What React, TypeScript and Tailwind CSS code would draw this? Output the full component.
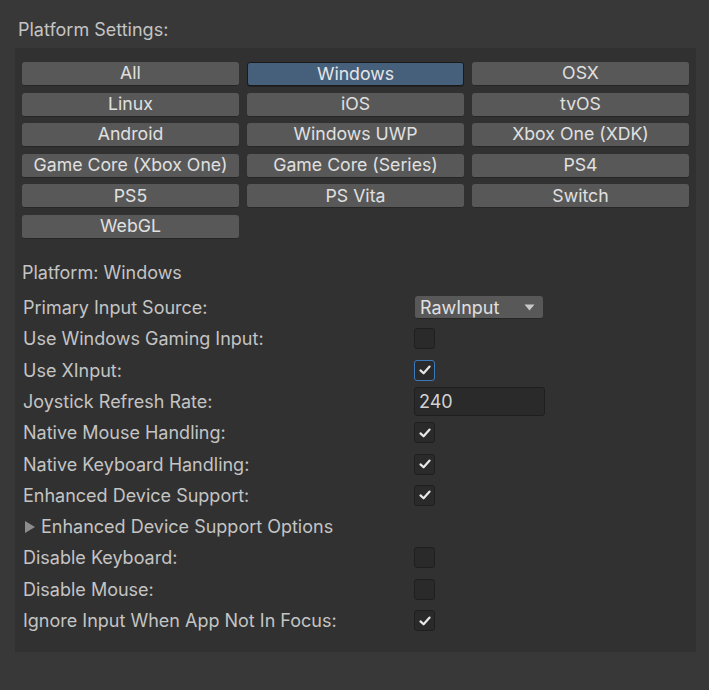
import React from "react";

const platforms = [
  "All", "Windows", "OSX",
  "Linux", "iOS", "tvOS",
  "Android", "Windows UWP", "Xbox One (XDK)",
  "Game Core (Xbox One)", "Game Core (Series)", "PS4",
  "PS5", "PS Vita", "Switch",
  "WebGL",
];

function Check() {
  return (
    <svg width="14" height="14" viewBox="0 0 14 14" className="block">
      <path d="M2.5 7.4 L5.6 10.3 L11.6 3.6" fill="none" stroke="#e8e8e8" strokeWidth="2.2" strokeLinecap="round" strokeLinejoin="round" />
    </svg>
  );
}

function Checkbox({ checked, focused }: { checked: boolean; focused?: boolean }) {
  return (
    <div
      className={
        focused
          ? "w-[21px] h-[21px] rounded-[3px] bg-[#2a2a2a] border border-[#3a79bb] flex items-center justify-center"
          : "w-[21px] h-[21px] rounded-[3px] bg-[#2a2a2a] border border-[#1f1f1f] flex items-center justify-center"
      }
    >
      {checked ? <Check /> : null}
    </div>
  );
}

type Row =
  | { label: string; kind: "dropdown"; value: string }
  | { label: string; kind: "check"; checked: boolean; focused?: boolean }
  | { label: string; kind: "text"; value: string }
  | { label: string; kind: "foldout" };

const rows: Row[] = [
  { label: "Primary Input Source:", kind: "dropdown", value: "RawInput" },
  { label: "Use Windows Gaming Input:", kind: "check", checked: false },
  { label: "Use XInput:", kind: "check", checked: true, focused: true },
  { label: "Joystick Refresh Rate:", kind: "text", value: "240" },
  { label: "Native Mouse Handling:", kind: "check", checked: true },
  { label: "Native Keyboard Handling:", kind: "check", checked: true },
  { label: "Enhanced Device Support:", kind: "check", checked: true },
  { label: "Enhanced Device Support Options", kind: "foldout" },
  { label: "Disable Keyboard:", kind: "check", checked: false },
  { label: "Disable Mouse:", kind: "check", checked: false },
  { label: "Ignore Input When App Not In Focus:", kind: "check", checked: true },
];

export default function App() {
  return (
    <div
      className="w-[709px] h-[690px] bg-[#383838] text-[#c4c4c4] overflow-hidden"
      style={{ fontFamily: "Inter, 'Noto Sans', sans-serif" }}
    >
      <div className="pl-[18px] pt-[18px] h-[48px] text-[18px] leading-[24px]">Platform Settings:</div>
      <div className="mx-[15px] w-[681px] h-[604px] bg-[#313131] px-[7px] pt-[14px]">
        <div className="grid grid-cols-3 gap-x-[8px] gap-y-[6.6px]">
          {platforms.map((p) => (
            <div
              key={p}
              className={
                p === "Windows"
                  ? "h-[24px] rounded-[3px] bg-[#46607c] border border-[#1a1a1a] shadow-[0_1px_0_#232323] flex items-center justify-center text-[17.7px] text-[#e6e6e6]"
                  : "h-[24px] rounded-[3px] bg-[#585858] border-b border-[#262626] flex items-center justify-center text-[17.7px] text-[#e0e0e0]"
              }
            >
              {p}
            </div>
          ))}
        </div>
        <div className="mt-[22px] h-[24px] leading-[24px] text-[18px] text-[#c4c4c4]">Platform: Windows</div>
        <div className="mt-[7px] pl-[1px]">
          {rows.map((r) => (
            <div key={r.label} className="h-[31.3px] flex items-center text-[18px]">
              {r.kind === "foldout" ? (
                <div className="flex items-center">
                  <svg width="12" height="14" viewBox="0 0 12 14" className="ml-[1px] mr-[5px]">
                    <path d="M1 1 L11 7 L1 13 Z" fill="#8c8c8c" />
                  </svg>
                  <span>{r.label}</span>
                </div>
              ) : (
                <>
                  <div className="w-[391px] shrink-0">{r.label}</div>
                  {r.kind === "dropdown" && (
                    <div className="ml-[1px] w-[128px] h-[23px] rounded-[3px] bg-[#585858] border-b border-[#262626] flex items-center justify-between pl-[5px] pr-[8px] text-[#e0e0e0]">
                      <span>{r.value}</span>
                      <svg width="11" height="7" viewBox="0 0 11 7">
                        <path d="M0.5 0.5 L10.5 0.5 L5.5 6.5 Z" fill="#c8c8c8" />
                      </svg>
                    </div>
                  )}
                  {r.kind === "check" && <Checkbox checked={r.checked} focused={r.focused} />}
                  {r.kind === "text" && (
                    <div className="w-[131px] h-[29px] rounded-[3px] bg-[#2a2a2a] border border-[#1f1f1f] flex items-center pl-[4px] text-[#d2d2d2]">
                      {r.value}
                    </div>
                  )}
                </>
              )}
            </div>
          ))}
        </div>
      </div>
    </div>
  );
}
